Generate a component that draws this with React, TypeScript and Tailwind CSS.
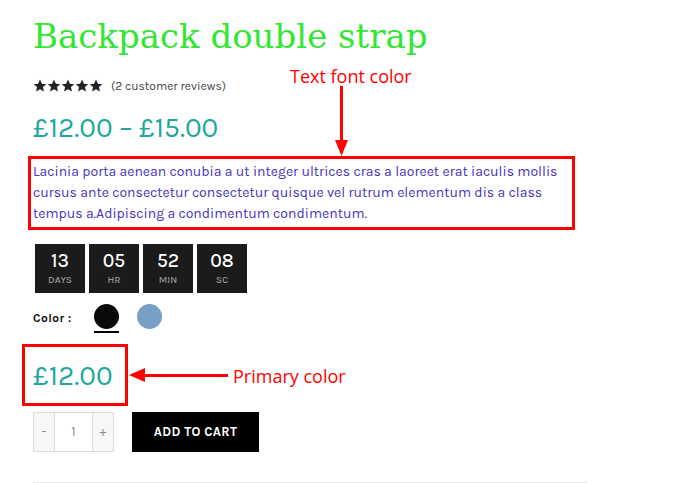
import React from "react";

const Star: React.FC = () => (
    <svg viewBox="0 0 24 24" className="w-[14px] h-[14px]" fill="#222">
        <path d="M12 1l3.2 7.1 7.6.7-5.8 5.1 1.8 7.6L12 17.5l-6.8 4 1.8-7.6-5.8-5.1 7.6-.7z" />
    </svg>
);

const TimeBox: React.FC<{ value: string; label: string }> = ({ value, label }) => (
    <div className="w-[50px] h-[49px] bg-[#1b1b1b] flex flex-col items-center justify-center">
        <span className="text-white text-[19px] leading-[20px] font-medium">{value}</span>
        <span className="text-[#999] text-[10px] leading-[12px] font-medium mt-[3px]">{label}</span>
    </div>
);

export default function App() {
    return (
        <div className="relative w-[679px] h-[483px] overflow-hidden bg-white font-['Karla','Liberation_Sans',sans-serif]">
            <div className="pl-[33px] pr-[92px] flex flex-col">
                <h1 className="mt-[12px] font-['DejaVu_Serif',serif] text-[34px] leading-[48px] text-[#33e633]">
                    Backpack double strap
                </h1>

                <div className="mt-[18px] flex items-center gap-[8px] h-[16px]">
                    <div className="flex">
                        <Star /><Star /><Star /><Star /><Star />
                    </div>
                    <span className="text-[12px] text-[#444]">(2 customer reviews)</span>
                </div>

                <div className="mt-[19px] text-[28px] leading-[30px] text-[#21a6a0]">
                    £12.00 – £15.00
                </div>

                <p className="mt-[18px] w-[540px] text-[14px] leading-[21px] text-[#4433bb]">
                    Lacinia porta aenean conubia a ut integer ultrices cras a laoreet erat iaculis mollis
                    cursus ante consectetur consectetur quisque vel rutrum elementum dis a class
                    tempus a.Adipiscing a condimentum condimentum.
                </p>

                <div className="mt-[20px] ml-[2px] flex gap-[4px]">
                    <TimeBox value="13" label="DAYS" />
                    <TimeBox value="05" label="HR" />
                    <TimeBox value="52" label="MIN" />
                    <TimeBox value="08" label="SC" />
                </div>

                <div className="mt-[10px] flex items-center h-[30px]">
                    <span className="text-[12px] font-bold text-[#111] w-[61px] tracking-[0.4px]">Color :</span>
                    <div className="flex flex-col items-center">
                        <span className="w-[25px] h-[25px] rounded-full bg-[#0a0a0a]" />
                        <span className="w-[25px] h-[2px] bg-black mt-[2px]" />
                    </div>
                    <span className="ml-[18px] mb-[4px] w-[25px] h-[25px] rounded-full bg-[#789fc4]" />
                </div>

                <div className="mt-[28px] text-[28px] leading-[30px] text-[#21a6a0]">£12.00</div>

                <div className="mt-[21px] flex items-center">
                    <div className="flex h-[40px] border border-[#ddd] text-[13px] text-[#888]">
                        <span className="w-[20px] flex items-center justify-center bg-[#f7f7f7]">-</span>
                        <span className="w-[39px] flex items-center justify-center border-x border-[#ddd] bg-white">1</span>
                        <span className="w-[20px] flex items-center justify-center bg-[#f7f7f7]">+</span>
                    </div>
                    <button className="ml-[18px] w-[127px] h-[40px] bg-black text-white text-[13px] font-bold tracking-[0.3px]">
                        ADD TO CART
                    </button>
                </div>

                <div className="mt-[30px] h-px bg-[#e5e5e5] w-[554px]" />
            </div>

            {/* annotations */}
            <div className="absolute left-[28px] top-[156px] w-[547px] h-[74px] border-[3px] border-[#ff0000]" />
            <span className="absolute left-[290px] top-[63px] text-[18px] text-[#ff0000] font-['Open_Sans','Liberation_Sans',sans-serif]">
                Text font color
            </span>
            <div className="absolute left-[340px] top-[86px] w-[3px] h-[56px] bg-[#ff0000]" />
            <svg className="absolute left-[335px] top-[140px]" width="13" height="16" viewBox="0 0 13 16">
                <polygon points="0,0 13,0 6.5,16" fill="#ff0000" />
            </svg>

            <div className="absolute left-[22px] top-[344px] w-[106px] h-[62px] border-[3px] border-[#ff0000]" />
            <svg className="absolute left-[129px] top-[368px]" width="16" height="14" viewBox="0 0 16 14">
                <polygon points="0,7 16,0 16,14" fill="#ff0000" />
            </svg>
            <div className="absolute left-[144px] top-[374px] w-[84px] h-[3px] bg-[#ff0000]" />
            <span className="absolute left-[233px] top-[363px] text-[18px] text-[#ff0000] font-['Open_Sans','Liberation_Sans',sans-serif]">
                Primary color
            </span>
        </div>
    );
}
